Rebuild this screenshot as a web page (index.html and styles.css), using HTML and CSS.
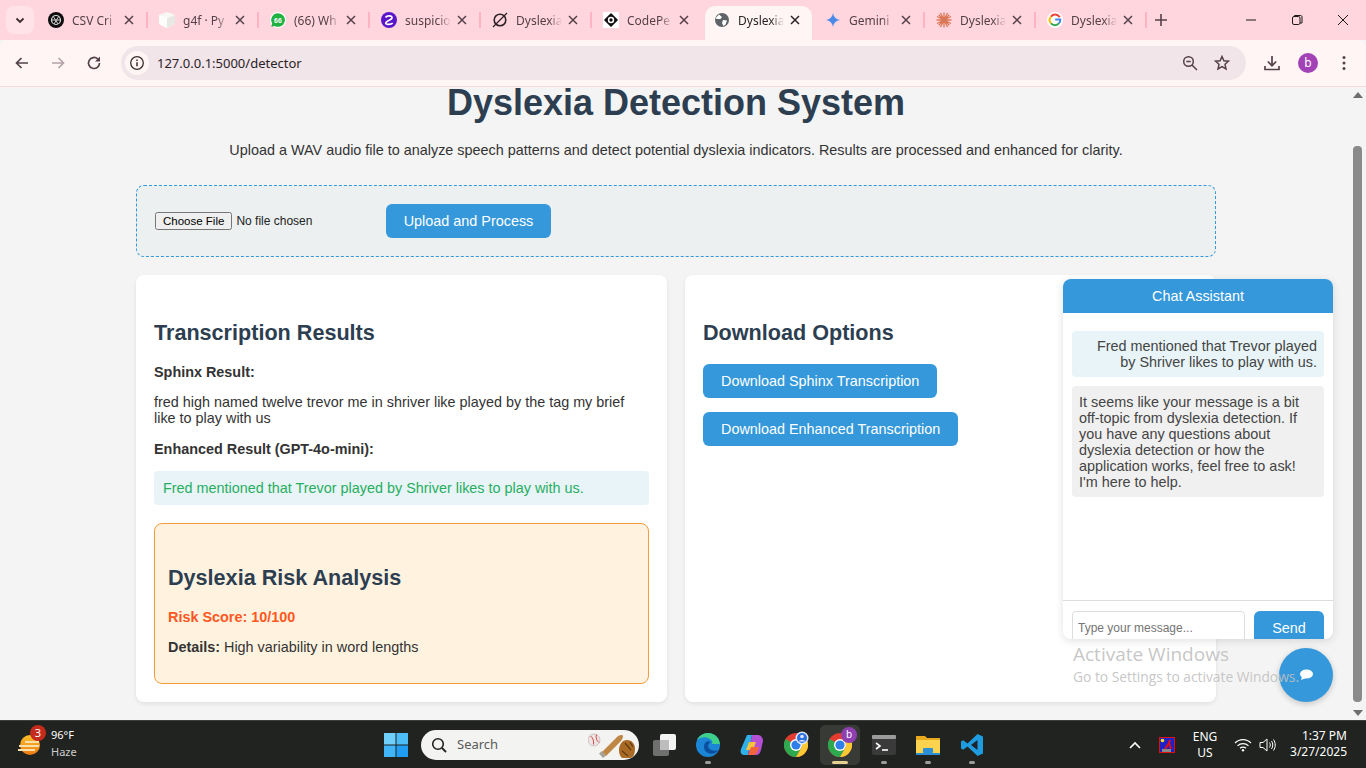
FILE: index.html
```html
<!DOCTYPE html>
<html lang="en">
<head>
  <meta charset="UTF-8">
  <title>Dyslexia Detection System</title>
  <link rel="stylesheet" href="styles.css">
</head>
<body>
  <svg class="defs" width="0" height="0">
    <defs>
      <linearGradient id="sun" x1="0" y1="0" x2="0" y2="1">
        <stop offset="0" stop-color="#fbbf2a"/>
        <stop offset="1" stop-color="#ee7a12"/>
      </linearGradient>
    </defs>
    <symbol id="chrome" viewBox="0 0 24 24">
      <circle cx="12" cy="12" r="12" fill="#e33b2e"/>
      <path d="M12 12 1.6 6A12 12 0 0 0 12 24l5.2-9z" fill="#2da94f"/>
      <path d="M12 6h10.4A12 12 0 0 1 12 24l5.2-9A6 6 0 0 0 12 6z" fill="#fcc934"/>
      <circle cx="12" cy="12" r="6" fill="#fff"/>
      <circle cx="12" cy="12" r="4.6" fill="#2f7fea"/>
    </symbol>
    <symbol id="close" viewBox="0 0 12 12">
      <path d="M2 2l8 8M10 2l-8 8" fill="none" stroke="currentColor" stroke-width="1.5"/>
    </symbol>
  </svg>

  <div class="tabstrip">
    <div class="tab-menu">
      <svg width="12" height="12" viewBox="0 0 12 12"><path d="M2.5 4.5 6 8l3.500-3.500" fill="none" stroke="#3a2c30" stroke-width="1.800"/></svg>
    </div>
    <div class="tab sep">
      <svg class="fav" viewBox="0 0 16 16"><circle cx="8" cy="8" r="8" fill="#0d0d0d"/><circle cx="8" cy="8" r="4.500" fill="none" stroke="#ddd" stroke-width="1.200"/><path d="M5 4l5 8M11 4l-5 8M3.500 8h9" stroke="#ccc" stroke-width="1"/></svg>
      <span class="tab-title">CSV Cri</span>
      <svg class="tab-x"><use href="#close"/></svg>
    </div>
    <div class="tab sep">
      <svg class="fav" viewBox="0 0 16 16"><path d="M8 0l8 3v9l-8 4-8-4V3z" fill="#f7f7f5"/><path d="M8 6.500 16 3v9l-8 4z" fill="#e8e8e4"/><path d="M8 6.500V16L0 12V3z" fill="#fdfdfb"/></svg>
      <span class="tab-title">g4f · Py</span>
      <svg class="tab-x"><use href="#close"/></svg>
    </div>
    <div class="tab sep">
      <svg class="fav" viewBox="0 0 16 16"><circle cx="8" cy="8" r="8" fill="#fff"/><path d="M8 1.200a6.800 6.800 0 0 0-5.800 10.300L1.300 14.800l3.400-.9A6.800 6.800 0 1 0 8 1.200z" fill="#1fb141"/><text x="8" y="10.500" class="fav-num">66</text></svg>
      <span class="tab-title">(66) Wh</span>
      <svg class="tab-x"><use href="#close"/></svg>
    </div>
    <div class="tab sep">
      <svg class="fav" viewBox="0 0 16 16"><circle cx="8" cy="8" r="8" fill="#5a16c9"/><path d="M4.500 5.500C6 3 11.500 3.300 11 6 10.600 8 5 8.500 4.700 11c-.2 1.800 5 2 7 .2M4.800 8.500" fill="none" stroke="#fff" stroke-width="1.700"/></svg>
      <span class="tab-title">suspicio</span>
      <svg class="tab-x"><use href="#close"/></svg>
    </div>
    <div class="tab sep">
      <svg class="fav" viewBox="0 0 16 16"><circle cx="8" cy="8" r="5.800" fill="none" stroke="#2b2326" stroke-width="1.600"/><path d="M1 15 15 1" stroke="#2b2326" stroke-width="1.200"/></svg>
      <span class="tab-title">Dyslexia</span>
      <svg class="tab-x"><use href="#close"/></svg>
    </div>
    <div class="tab">
      <svg class="fav" viewBox="0 0 16 16"><rect width="16" height="16" fill="#fff"/><path d="M8 2 14 8 8 14 2 8z" fill="#111" stroke="#111" stroke-width="1.600" stroke-linejoin="round"/><circle cx="8" cy="8" r="3.200" fill="#fff"/><circle cx="8" cy="8" r="1.700" fill="#111"/></svg>
      <span class="tab-title">CodePe</span>
      <svg class="tab-x"><use href="#close"/></svg>
    </div>
    <div class="tab active">
      <svg class="fav" viewBox="0 0 16 16"><circle cx="8" cy="8" r="7" fill="#5f6368"/><path d="M5 2.500 8 5 6.500 7 3 7 1.500 6zM9 8l4 .5-1.500 4-2 1.500L8 11z" fill="#fff"/></svg>
      <span class="tab-title">Dyslexia</span>
      <svg class="tab-x"><use href="#close"/></svg>
    </div>
    <div class="tab sep">
      <svg class="fav" viewBox="0 0 16 16"><path d="M8 1c.6 4 3 6.400 7 7-4 .6-6.400 3-7 7-.6-4-3-6.400-7-7 4-.6 6.400-3 7-7z" fill="#4a8bea"/></svg>
      <span class="tab-title">Gemini</span>
      <svg class="tab-x"><use href="#close"/></svg>
    </div>
    <div class="tab sep">
      <svg class="fav" viewBox="0 0 16 16"><path d="M8 .5v15M.5 8h15M2.700 2.700l10.600 10.600M13.300 2.700 2.700 13.300M4.500 1l7 14M11.500 1l-7 14M1 4.500l14 7M15 4.500l-14 7" stroke="#d97757" stroke-width="1.300"/></svg>
      <span class="tab-title">Dyslexia</span>
      <svg class="tab-x"><use href="#close"/></svg>
    </div>
    <div class="tab sep">
      <svg class="fav" viewBox="0 0 16 16"><circle cx="8" cy="8" r="8" fill="#fff"/><path d="M12.800 5.300A5.400 5.400 0 0 0 3.900 4.600" fill="none" stroke="#ea4335" stroke-width="2"/><path d="M3.900 4.600a5.400 5.400 0 0 0 0 6.800" fill="none" stroke="#fbbc05" stroke-width="2"/><path d="M3.900 11.400a5.400 5.400 0 0 0 8.200-.2" fill="none" stroke="#34a853" stroke-width="2"/><path d="M12.100 11.200a5.400 5.400 0 0 0 1.200-3.600H8.200" fill="none" stroke="#4285f4" stroke-width="2"/></svg>
      <span class="tab-title">Dyslexia</span>
      <svg class="tab-x"><use href="#close"/></svg>
    </div>
    <div class="tab-new">
      <svg width="12" height="12" viewBox="0 0 12 12"><path d="M6 0v12M0 6h12" stroke="#55404a" stroke-width="1.600"/></svg>
    </div>
    <div class="win-controls">
      <svg width="46" height="12" viewBox="0 0 46 12"><path d="M18 6h10" stroke="#1a1a1a" stroke-width="1"/></svg>
      <svg width="46" height="12" viewBox="0 0 46 12"><rect x="18.500" y="2.500" width="7.500" height="8" rx="1.500" fill="none" stroke="#1a1a1a"/><path d="M20.500 2.500v-1h6c1 0 1.500.5 1.500 1.500v6h-2" fill="none" stroke="#1a1a1a"/></svg>
      <svg width="46" height="12" viewBox="0 0 46 12"><path d="M18 1l10 10M28 1 18 11" stroke="#1a1a1a" stroke-width="1"/></svg>
    </div>
  </div>

  <div class="toolbar">
    <button class="tool-btn">
      <svg width="16" height="16" viewBox="0 0 16 16"><path d="M14 8H2.500M7.500 3l-5 5 5 5" fill="none" stroke="#55404a" stroke-width="1.700"/></svg>
    </button>
    <button class="tool-btn">
      <svg width="16" height="16" viewBox="0 0 16 16"><path d="M2 8h11.500M8.500 3l5 5-5 5" fill="none" stroke="#b3a3a8" stroke-width="1.700"/></svg>
    </button>
    <button class="tool-btn">
      <svg width="16" height="16" viewBox="0 0 16 16"><path d="M13.500 8A5.500 5.500 0 1 1 11.800 4L13.500 5.700" fill="none" stroke="#55404a" stroke-width="1.700"/><path d="M14 1.500V6.500H9z" fill="#55404a"/></svg>
    </button>
    <div class="omnibox">
      <span class="site-info">
        <svg width="16" height="16" viewBox="0 0 16 16"><circle cx="8" cy="8" r="6.300" fill="none" stroke="#3a2c30" stroke-width="1.300"/><path d="M8 7.200v4M8 4.500v1.400" stroke="#3a2c30" stroke-width="1.500"/></svg>
      </span>
      <span class="url">127.0.0.1:5000/detector</span>
      <svg class="omni-icon" width="16" height="16" viewBox="0 0 16 16"><circle cx="6.500" cy="6.500" r="4.800" fill="none" stroke="#55404a" stroke-width="1.500"/><path d="M10 10l5 5M4.300 6.500h4.400" stroke="#55404a" stroke-width="1.500"/></svg>
      <svg class="omni-icon" width="16" height="16" viewBox="0 0 16 16"><path d="M8 1.500l1.900 4.300 4.600.4-3.500 3.100 1 4.600L8 11.500l-4 2.400 1-4.600-3.500-3.100 4.600-.4z" fill="none" stroke="#55404a" stroke-width="1.500"/></svg>
    </div>
    <svg class="download" width="16" height="16" viewBox="0 0 16 16"><path d="M8 1v9M3.800 6.500 8 10.700l4.200-4.200M1 11v3.500h14V11" fill="none" stroke="#55404a" stroke-width="1.700"/></svg>
    <span class="avatar">b</span>
    <svg class="dots" width="4" height="16" viewBox="0 0 4 16"><circle cx="2" cy="2.500" r="1.500" fill="#55404a"/><circle cx="2" cy="8" r="1.500" fill="#55404a"/><circle cx="2" cy="13.500" r="1.500" fill="#55404a"/></svg>
  </div>

  <div class="viewport">
    <div class="page">
      <h1>Dyslexia Detection System</h1>
      <p class="intro">Upload a WAV audio file to analyze speech patterns and detect potential dyslexia indicators. Results are processed and enhanced for clarity.</p>

      <form class="upload">
        <input type="file" class="file-input">
        <button type="button" class="btn upload-btn">Upload and Process</button>
      </form>

      <div class="columns">
        <section class="card">
          <h2>Transcription Results</h2>
          <p class="label">Sphinx Result:</p>
          <p class="sphinx">fred high named twelve trevor me in shriver like played by the tag my brief like to play with us</p>
          <p class="label enhanced-label">Enhanced Result (GPT-4o-mini):</p>
          <div class="enhanced">Fred mentioned that Trevor played by Shriver likes to play with us.</div>
          <div class="risk">
            <h3>Dyslexia Risk Analysis</h3>
            <p class="score">Risk Score: 10/100</p>
            <p class="details"><strong>Details:</strong> High variability in word lengths</p>
          </div>
        </section>
        <section class="card">
          <h2>Download Options</h2>
          <div class="downloads">
            <a class="btn" href="#">Download Sphinx Transcription</a>
            <a class="btn" href="#">Download Enhanced Transcription</a>
          </div>
        </section>
      </div>
    </div>

    <div class="scrollbar">
      <span class="arrow-up"></span>
      <span class="track"><span class="thumb"></span></span>
      <span class="arrow-down"></span>
    </div>

    <div class="chat">
      <div class="chat-head">Chat Assistant</div>
      <div class="chat-body">
        <div class="msg msg-user">Fred mentioned that Trevor played by Shriver likes to play with us.</div>
        <div class="msg msg-bot">It seems like your message is a bit off-topic from dyslexia detection. If you have any questions about dyslexia detection or how the application works, feel free to ask! I'm here to help.</div>
      </div>
      <div class="chat-foot">
        <input class="chat-input" type="text" placeholder="Type your message...">
        <button class="chat-send" type="button">Send</button>
      </div>
    </div>

    <div class="chat-toggle">
      <svg width="16" height="12" viewBox="0 0 16 12"><ellipse cx="8.500" cy="5" rx="6.500" ry="4.500" fill="#fff"/><path d="M4 7.500 3 11l5-2z" fill="#fff"/></svg>
    </div>

    <div class="watermark">
      <div class="wm-title">Activate Windows</div>
      <div class="wm-sub">Go to Settings to activate Windows.</div>
    </div>
  </div>

  <div class="taskbar">
    <div class="weather">
      <svg class="weather-icon" width="26" height="26" viewBox="0 0 26 26">
        <circle cx="13" cy="13" r="10" fill="url(#sun)"/>
        <path d="M8 10h14M2 14h20M1 18h17" stroke="#f7e0ac" stroke-width="2"/>
      </svg>
      <span class="badge">3</span>
      <div class="weather-text">
        <div class="temp">96°F</div>
        <div class="cond">Haze</div>
      </div>
    </div>

    <div class="dock">
      <span class="dock-item">
        <svg width="24" height="24" viewBox="0 0 24 24"><rect width="11.500" height="11.500" fill="#6fd0fb"/><rect x="12.500" width="11.500" height="11.500" fill="#4dbdf8"/><rect y="12.500" width="11.500" height="11.500" fill="#3fb4f7"/><rect x="12.500" y="12.500" width="11.500" height="11.500" fill="#1e9df2"/></svg>
      </span>
      <div class="search">
        <svg width="16" height="16" viewBox="0 0 16 16"><circle cx="7" cy="7" r="5.300" fill="none" stroke="#222" stroke-width="1.600"/><path d="M11 11l4 4" stroke="#222" stroke-width="1.800"/></svg>
        <span class="search-text">Search</span>
        <svg class="search-art" width="48" height="28" viewBox="0 0 48 28">
          <circle cx="6" cy="9" r="6" fill="#efe3e3" stroke="#bfb0b0" stroke-width=".7"/>
          <path d="M2.500 5c2.500 2 3.500 5 3 8.500M8.500 3.500c-1 3 0 6 2.500 8" fill="none" stroke="#c8504a" stroke-width="1"/>
          <path d="M14 21 29 6c1.500-2 6-3 6-1s-1 4-3 6L18 25z" fill="#bf8744"/>
          <path d="M11 22.500l3-2.500 4 4.500-3 2.500z" fill="#a8a196"/>
          <path d="M31 19c0-5 3-10 8-10s8 4 8 9-2 9-5 9H34c-2-2-3-4-3-8z" fill="#a96a25"/>
          <path d="M37 12l6 7M42 11l3 5M34 20l6 5" stroke="#5f3a10" stroke-width="1.200"/>
        </svg>
      </div>
      <span class="dock-item">
        <svg width="24" height="24" viewBox="0 0 24 24"><rect x="8" y="1" width="16" height="16" rx="2" fill="#f4f4f4"/><rect x="1" y="7" width="16" height="16" rx="2" fill="#6f6f6f"/><rect x="8" y="7" width="9" height="10" fill="#bdbdbd"/></svg>
      </span>
      <span class="dock-item open">
        <svg width="24" height="24" viewBox="0 0 24 24"><circle cx="12" cy="12" r="12" fill="#1b86d6"/><path d="M24 12c0-7-5-12-12-12C7 0 3 3 1 7c3-3 9-4 13-1 2 1 3 4 2 5h8z" fill="#3fd08a"/><path d="M8 14c0 5 5 8 11 6 2-1 3-2 4-3-3 1-7 1-9-1-3-2-2-6 1-7-3-2-7 0-7 5z" fill="#0b4f9e"/></svg>
      </span>
      <span class="dock-item">
        <svg width="24" height="24" viewBox="0 0 24 24"><path d="M7 2h5l-4 20H4C1 22 0 19 1 16z" fill="#2fb0e8"/><path d="M12 2h6c3 0 5 3 5 6l-2 9c-1 3-2 5-5 5H8z" fill="#b44fd6"/><path d="M9 9h7l-3 8H6z" fill="#f7c33c"/><path d="M8 22l3-8h8c-1 5-3 8-6 8z" fill="#f2643c"/></svg>
      </span>
      <span class="dock-item">
        <svg width="24" height="24"><use href="#chrome"/></svg>
        <svg class="profile-mark" width="14" height="14" viewBox="0 0 14 14"><circle cx="7" cy="7" r="6.500" fill="#dbe9ff"/><circle cx="7" cy="7" r="5" fill="#2f6fdd"/><circle cx="7" cy="5.500" r="1.800" fill="#dbe9ff"/><path d="M3.500 10.500c1-2 6-2 7 0" fill="#dbe9ff"/></svg>
      </span>
      <span class="dock-item current">
        <svg width="24" height="24"><use href="#chrome"/></svg>
        <span class="dock-badge">b</span>
      </span>
      <span class="dock-item open">
        <svg width="24" height="24" viewBox="0 0 24 24"><rect y="2" width="24" height="20" rx="2" fill="#3a3a3a"/><rect y="2" width="24" height="4" rx="1" fill="#9b9b9b"/><path d="M4 10l4 3-4 3" fill="none" stroke="#fff" stroke-width="1.600"/><path d="M10 17h6" stroke="#fff" stroke-width="1.600"/></svg>
      </span>
      <span class="dock-item open">
        <svg width="24" height="24" viewBox="0 0 24 24"><path d="M0 3h9l2 2h13v17H0z" fill="#e9a91f"/><rect y="7" width="24" height="15" fill="#fcd34f"/><rect x="7" y="15" width="10" height="5" rx="1" fill="#2b8fd8"/><rect y="20" width="24" height="2" fill="#2b8fd8"/></svg>
      </span>
      <span class="dock-item open">
        <svg width="24" height="24" viewBox="0 0 24 24"><path d="M17.500 1 23 3.500v17L17.500 23 7.500 13.500l-4.300 3.300L1 15.500v-7l2.200-1.300 4.300 3.300z" fill="#1f9be0"/><path d="M17.500 7 11 12l6.500 5z" fill="#20232a"/></svg>
      </span>
    </div>

    <div class="tray">
      <svg class="tray-up" width="12" height="8" viewBox="0 0 12 8"><path d="M1 7l5-5 5 5" fill="none" stroke="#fff" stroke-width="1.600"/></svg>
      <svg class="tray-app" width="16" height="16" viewBox="0 0 16 16"><rect x=".5" y=".5" width="15" height="15" fill="#2020c8" stroke="#e01010"/><circle cx="3.500" cy="3.500" r="1.800" fill="#f5e020"/><path d="M6 12l4-6 1-3M10 6l2 6" stroke="#e01010" stroke-width="2"/><rect x="3" y="12" width="9" height="3" fill="#888"/></svg>
      <div class="lang"><div>ENG</div><div>US</div></div>
      <svg class="tray-wifi" width="18" height="14" viewBox="0 0 18 14"><path d="M1 5c4.500-4.500 11.500-4.500 16 0M3.500 7.800c3-3 8-3 11 0M6 10.300c1.600-1.500 4.400-1.500 6 0" fill="none" stroke="#fff" stroke-width="1.200"/><circle cx="9" cy="12.300" r="1.200" fill="#fff"/></svg>
      <svg class="tray-sound" width="18" height="14" viewBox="0 0 18 14"><path d="M1 4.500h3L8 1v12L4 9.500H1z" fill="none" stroke="#fff"/><path d="M10.500 4.500c1 1.500 1 3.500 0 5M12.500 3c1.700 2.500 1.700 5.500 0 8M14.500 1.500c2.300 3.500 2.300 7.500 0 11" fill="none" stroke="#fff"/></svg>
      <div class="clock"><div>1:37 PM</div><div>3/27/2025</div></div>
    </div>
  </div>
</body>
</html>
```

FILE: styles.css
```css
* {
  box-sizing: border-box;
}

body {
  margin: 0;
  height: 100vh;
  overflow: hidden;
  display: flex;
  flex-direction: column;
  background: #f4f4f4;
  color: #333;
  font-family: "Liberation Sans", Arial, sans-serif;
}

.defs {
  position: absolute;
}

/* browser chrome */
.tabstrip {
  position: relative;
  z-index: 1;
  height: 40px;
  flex: none;
  display: flex;
  align-items: flex-end;
  padding-left: 6px;
  background: #ffd6de;
  font-family: "Noto Sans", sans-serif;
  font-size: 12px;
  color: #55404a;
}

.tab-menu {
  width: 28px;
  height: 28px;
  margin: 0 3px 6px 0;
  display: flex;
  align-items: center;
  justify-content: center;
  background: #ffe3e8;
  border-radius: 8px;
}

.tab {
  position: relative;
  width: 111px;
  height: 34px;
  display: flex;
  align-items: center;
  padding-left: 11px;
}

.tab.sep::after {
  content: "";
  position: absolute;
  right: 0;
  top: 6px;
  width: 2px;
  height: 16px;
  background: #ffb3c0;
}

.tab.active {
  background: #fff5f4;
  color: #2b2326;
  border-radius: 10px 10px 0 0;
  margin: 0 2px;
  width: 107px;
  padding-left: 9px;
}

.fav {
  width: 16px;
  height: 16px;
  flex: none;
  margin: -6px 8px 0 0;
}

.fav-num {
  font-family: "Liberation Sans", sans-serif;
  font-size: 7px;
  font-weight: 700;
  fill: #fff;
  text-anchor: middle;
}

.tab-title {
  width: 46px;
  margin-top: -6px;
  white-space: nowrap;
  -webkit-mask-image: linear-gradient(to right, #000 72%, transparent);
  mask-image: linear-gradient(to right, #000 72%, transparent);
}

.tab-x {
  width: 12px;
  height: 12px;
  margin: -6px 0 0 5px;
  color: #55404a;
}

.active .tab-x {
  color: #2b2326;
}

.tab-new {
  width: 12px;
  height: 12px;
  margin: 0 0 14px 8px;
  line-height: 0;
}

.win-controls {
  margin: 0 0 14px auto;
  display: flex;
  line-height: 0;
}

.toolbar {
  position: relative;
  z-index: 1;
  height: 47px;
  flex: none;
  display: flex;
  align-items: center;
  padding: 0 0 1px 4px;
  background: #fff5f4;
  border-bottom: 1px solid #f8d9dd;
  border-radius: 8px 8px 0 0;
}

.tool-btn {
  width: 36px;
  height: 32px;
  padding: 0;
  border: none;
  background: none;
  display: flex;
  align-items: center;
  justify-content: center;
}

.omnibox {
  width: 1125px;
  height: 34px;
  margin-left: 9px;
  display: flex;
  align-items: center;
  padding: 0 16px 0 4px;
  gap: 16px;
  background: #f1e5e9;
  border-radius: 17px;
}

.site-info {
  width: 24px;
  height: 24px;
  display: flex;
  align-items: center;
  justify-content: center;
  background: #fff5f4;
  border-radius: 50%;
}

.url {
  flex: 1;
  margin-left: -8px;
  font-family: "Noto Sans", sans-serif;
  font-size: 13px;
  color: #2b2326;
}

.download {
  margin-left: 18px;
}

.avatar {
  width: 20px;
  height: 20px;
  margin-left: 18px;
  display: flex;
  align-items: center;
  justify-content: center;
  background: #a142b5;
  color: #fff;
  border-radius: 50%;
  font-family: "Noto Sans", sans-serif;
  font-size: 12px;
}

.dots {
  margin-left: 24px;
}

/* page */
.viewport {
  position: relative;
  height: 633px;
  flex: none;
  display: flex;
}

.page {
  flex: 1;
  padding: 0 133px 0 136px;
  font-size: 14.4px;
}

h1 {
  margin: 0;
  font-size: 36px;
  line-height: 32px;
  text-align: center;
  color: #2c3e50;
}

.intro {
  margin: 23px 0 27px;
  line-height: 16px;
  text-align: center;
}

.upload {
  height: 72px;
  display: flex;
  align-items: center;
  padding-left: 18px;
  background: #ecf0f1;
  border: 1px dashed #3498db;
  border-radius: 8px;
}

.file-input {
  width: 231px;
  font-size: 12px;
  color: #222;
}

.file-input::file-selector-button {
  margin-right: 4px;
  font-size: 11.5px;
}

.btn {
  display: inline-block;
  height: 34px;
  padding: 0 18px;
  border: none;
  border-radius: 6px;
  background: #3498db;
  color: #fff;
  font-family: inherit;
  font-size: 14.4px;
  line-height: 34px;
  text-decoration: none;
}

.upload-btn {
  width: 165px;
  padding: 0;
}

.columns {
  margin-top: 18px;
  display: grid;
  grid-template-columns: 1fr 1fr;
  gap: 18px;
}

.card {
  height: 427px;
  padding: 18px;
  background: #fff;
  border-radius: 8px;
  box-shadow: 0 2px 4px rgba(0, 0, 0, 0.08);
}

h2 {
  margin: 27px 0 19px;
  font-size: 21.6px;
  line-height: 25px;
  color: #2c3e50;
}

.label {
  margin: 0;
  line-height: 16px;
  font-weight: 700;
}

.sphinx {
  margin: 14px 0 15px;
  line-height: 16px;
}

.enhanced {
  margin: 14px 0 18px;
  height: 34px;
  padding: 9px;
  background: #e8f4f8;
  border-radius: 4px;
  color: #27ae60;
  line-height: 16px;
}

.risk {
  height: 161px;
  padding: 14px 13px;
  background: #fff3e0;
  border: 1px solid #f39c3d;
  border-radius: 8px;
}

h3 {
  margin: 27px 0 19px;
  font-size: 21.6px;
  line-height: 25px;
  color: #2c3e50;
}

.score {
  margin: 0 0 14px;
  line-height: 16px;
  font-weight: 700;
  color: #ff5722;
}

.details {
  margin: 0;
  line-height: 16px;
}

.downloads {
  display: flex;
  flex-direction: column;
  align-items: flex-start;
  gap: 14px;
}

/* scrollbar */
.scrollbar {
  width: 17px;
  flex: none;
  display: flex;
  flex-direction: column;
  align-items: center;
  background: #f4f4f4;
}

.arrow-up,
.arrow-down {
  width: 0;
  height: 0;
  flex: none;
  border-left: 5px solid transparent;
  border-right: 5px solid transparent;
}

.arrow-up {
  margin: 5px 0 0;
  border-bottom: 6px solid #6e6e6e;
}

.arrow-down {
  margin: 0 0 4px;
  border-top: 6px solid #6e6e6e;
}

.track {
  flex: 1;
  width: 9px;
  padding-top: 48px;
}

.thumb {
  display: block;
  height: 556px;
  background: #8a8a8a;
  border-radius: 4px;
}

/* chat widget, floats over the page */
.chat {
  position: absolute;
  top: 192px;
  right: 33px;
  width: 270px;
  height: 360px;
  display: flex;
  flex-direction: column;
  overflow: hidden;
  background: #fff;
  border-radius: 8px;
  box-shadow: 0 2px 8px rgba(0, 0, 0, 0.12);
}

.chat-head {
  height: 34px;
  flex: none;
  background: #3498db;
  color: #fff;
  font-size: 14.4px;
  line-height: 34px;
  text-align: center;
}

.chat-body {
  height: 288px;
  flex: none;
  padding: 18px 9px 0;
  border-bottom: 1px solid #ddd;
}

.msg {
  padding: 7px;
  border-radius: 4px;
  font-size: 14.4px;
  line-height: 16px;
  color: #444;
}

.msg-user {
  margin-bottom: 9px;
  background: #e8f4f8;
  text-align: right;
}

.msg-bot {
  padding-top: 8px;
  background: #f0f0f0;
}

.chat-foot {
  flex: none;
  display: flex;
  gap: 9px;
  padding: 10px 9px 0;
}

.chat-input {
  width: 173px;
  height: 34px;
  padding: 0 5px;
  border: 1px solid #ddd;
  border-radius: 4px;
  font-family: "Liberation Sans", sans-serif;
  font-size: 12px;
}

.chat-input::placeholder {
  color: #757575;
}

.chat-send {
  width: 70px;
  height: 34px;
  border: none;
  border-radius: 6px;
  background: #3498db;
  color: #fff;
  font-family: inherit;
  font-size: 14.4px;
}

.chat-toggle {
  position: absolute;
  top: 561px;
  right: 33px;
  width: 54px;
  height: 54px;
  display: flex;
  align-items: center;
  justify-content: center;
  background: #3498db;
  border-radius: 50%;
  box-shadow: 0 2px 6px rgba(0, 0, 0, 0.2);
}

.watermark {
  position: absolute;
  top: 554px;
  left: 1073px;
  font-family: "Open Sans", sans-serif;
  color: rgba(192, 192, 192, 0.9);
  white-space: nowrap;
  pointer-events: none;
}

.wm-title {
  font-size: 19px;
  line-height: 26px;
}

.wm-sub {
  font-size: 13.8px;
  line-height: 20px;
}

/* windows taskbar */
.taskbar {
  position: relative;
  height: 48px;
  flex: none;
  display: flex;
  align-items: center;
  background: #20231f;
  border-top: 1px solid #3c3e3a;
  font-family: "Noto Sans", sans-serif;
  color: #fff;
}

.weather {
  position: relative;
  width: 374px;
  display: flex;
  align-items: center;
  padding-left: 17px;
}

.badge {
  position: absolute;
  left: 30px;
  top: -4px;
  width: 16px;
  height: 16px;
  background: #c42b1c;
  border-radius: 50%;
  font-size: 11px;
  line-height: 16px;
  text-align: center;
}

.weather-text {
  margin: -2px 0 0 8px;
  font-size: 11px;
  line-height: 16.500px;
}

.cond {
  color: #ccc;
}

.dock {
  display: flex;
  align-items: center;
}

.dock-item {
  position: relative;
  width: 44px;
  height: 40px;
  display: flex;
  align-items: center;
  justify-content: center;
}

.dock-item.open::after,
.dock-item.current::after {
  content: "";
  position: absolute;
  bottom: 1px;
  width: 6px;
  height: 3px;
  background: #9c9c9c;
  border-radius: 2px;
}

.dock-item.current {
  width: 40px;
  margin: 0 2px;
  background: #383a36;
  border-radius: 5px;
}

.dock-item.current::after {
  width: 16px;
  background: #e6d08f;
}

.profile-mark {
  position: absolute;
  top: 6px;
  right: 9px;
}

.dock-badge {
  position: absolute;
  top: 2px;
  right: 3px;
  width: 16px;
  height: 16px;
  background: #8e3fb0;
  border-radius: 50%;
  font-size: 10px;
  line-height: 15px;
  text-align: center;
}

.search {
  width: 218px;
  height: 30px;
  margin: 0 3px;
  display: flex;
  align-items: center;
  padding: 0 3px 0 10px;
  background: #f3f3f1;
  border-radius: 15px;
  color: #5a5a5a;
  font-size: 13px;
}

.search-text {
  flex: 1;
  margin: -2px 0 0 10px;
}

.tray {
  margin-left: auto;
  display: flex;
  align-items: center;
  padding-right: 19px;
  font-size: 12px;
  line-height: 16px;
}

.tray-app {
  margin-left: 18px;
}

.lang {
  width: 30px;
  margin-left: 15px;
  text-align: center;
}

.tray-wifi {
  margin-left: 14px;
}

.tray-sound {
  margin-left: 7px;
}

.clock {
  width: 60px;
  margin: -2px 0 0 10px;
  text-align: right;
}
```
